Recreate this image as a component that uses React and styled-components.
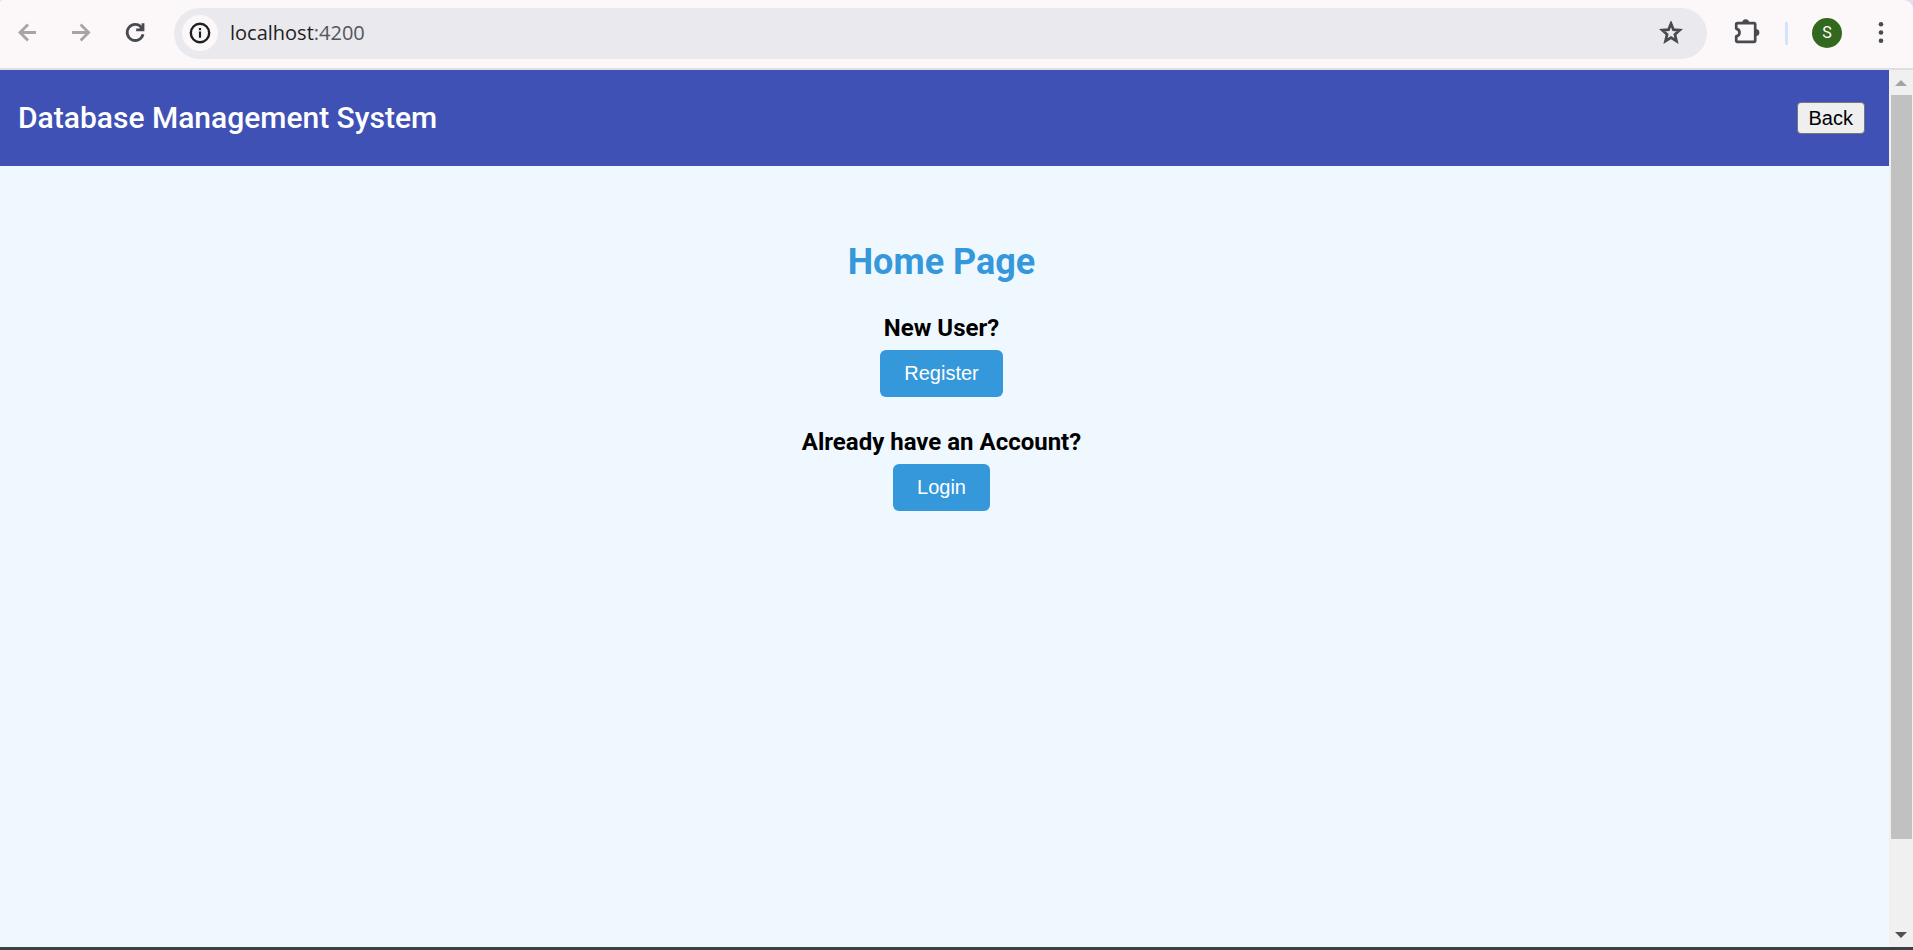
import React from "react";
import styled, { createGlobalStyle } from "styled-components";

const GlobalStyle = createGlobalStyle`
  *, *::before, *::after { box-sizing: border-box; }
  body { margin: 0; background: #dce1ee; }
  h1, h2, p { margin: 0; }
`;

const Window = styled.div`
  display: flex;
  flex-direction: column;
  min-height: 100vh;
`;

const BrowserBar = styled.div`
  display: flex;
  align-items: center;
  height: 70px;
  padding: 0 28px 2px 15px;
  background: #fcf8f9;
  border-bottom: 2px solid #dfdee0;
  border-radius: 3px 9px 0 0;
`;

const NavGroup = styled.nav`
  display: flex;
  gap: 30px;
  margin-right: 27px;
`;

const IconButton = styled.button`
  display: flex;
  padding: 0;
  border: 0;
  background: none;
  color: ${(p) => (p.$muted ? "#a6a4a5" : "#474a4f")};
`;

const AddressBar = styled.div`
  display: flex;
  flex: 1;
  align-items: center;
  height: 51px;
  padding: 0 24px 0 8px;
  border-radius: 26px;
  background: #e9e9ee;
`;

const SiteInfo = styled.button`
  display: flex;
  align-items: center;
  justify-content: center;
  width: 36px;
  height: 36px;
  padding: 0;
  border: 0;
  border-radius: 50%;
  background: #fcf8f9;
  color: #1f1f1f;
`;

const Address = styled.p`
  flex: 1;
  margin-left: 12px;
  font: 20px/28px "Open Sans", "Noto Sans", sans-serif;
  color: #1f1f1f;
`;

const Port = styled.span`
  color: #55555a;
`;

const ToolGroup = styled.div`
  display: flex;
  align-items: center;
  gap: 24px;
  margin-left: 26px;
`;

const Divider = styled.span`
  width: 3px;
  height: 23px;
  border-radius: 1px;
  background: #d3e3fd;
`;

const Avatar = styled.button`
  width: 30px;
  height: 30px;
  margin-right: 11px;
  padding: 0;
  border: 0;
  border-radius: 50%;
  background: #33691e;
  color: #fff;
  font: 16px/30px Roboto, sans-serif;
`;

const Viewport = styled.div`
  display: flex;
  flex: 1;
  border-bottom: 3px solid #3f3e42;
`;

const Page = styled.div`
  display: flex;
  flex: 1;
  flex-direction: column;
  background: #f0f8ff;
`;

const Header = styled.header`
  display: flex;
  align-items: center;
  justify-content: space-between;
  height: 96px;
  padding: 0 24px 0 18px;
  background: #3f51b5;
`;

const Brand = styled.p`
  font: 500 30px/48px Roboto, sans-serif;
  color: #fff;
`;

const BackButton = styled.button`
  height: 32px;
  padding: 0 11px;
  border: 1px solid #767676;
  border-radius: 4px;
  background: #efefef;
  color: #000;
  font: 20px/24px "Liberation Sans", Arial, sans-serif;
`;

const Main = styled.main`
  display: flex;
  flex-direction: column;
  align-items: center;
  gap: 30px;
  padding: 75px 6px 0 0;
`;

const PageTitle = styled.h1`
  font: 700 36px/42px Roboto, sans-serif;
  color: #3498db;
`;

const Choice = styled.section`
  display: flex;
  flex-direction: column;
  align-items: center;
  gap: 7px;
`;

const Question = styled.h2`
  font: 700 24px/30px Roboto, sans-serif;
  color: #000;
`;

const ActionButton = styled.button`
  padding: 12px 24px;
  border: 0;
  border-radius: 6px;
  background: #3498db;
  color: #fff;
  font: 20px/23px "Liberation Sans", Arial, sans-serif;
`;

const Scrollbar = styled.div`
  display: flex;
  flex-direction: column;
  width: 24px;
  background: #f0f0f0;
`;

const ScrollArrow = styled.span`
  display: flex;
  align-items: center;
  justify-content: center;
  height: 25px;
  color: ${(p) => (p.$muted ? "#a3a3a3" : "#505050")};
`;

const ScrollTrack = styled.div`
  flex: 1;
  padding: 0 1px 0 2px;
`;

const ScrollThumb = styled.div`
  height: 90%;
  background: #c1c1c1;
`;

const ArrowIcon = ({ forward }) => (
  <svg width="24" height="24" viewBox="0 0 24 24" fill="none" stroke="currentColor" strokeWidth="2.8">
    {forward ? (
      <path d="M3 11.5H20M11.6 3.5L19.6 11.5L11.6 19.5" />
    ) : (
      <path d="M21 11.5H4.6M13 3.5L5 11.5L13 19.5" />
    )}
  </svg>
);

const ReloadIcon = () => (
  <svg width="24" height="24" viewBox="0 0 24 24" fill="none" stroke="currentColor" strokeWidth="2.8">
    <path d="M20 13.2A8 8 0 1 1 18.4 6.4" />
    <path d="M20 2.2V8.8H13.2" />
    <path d="M15.6 8.6L20 4.4V9Z" fill="currentColor" stroke="none" />
  </svg>
);

const InfoIcon = () => (
  <svg width="22" height="22" viewBox="0 0 22 22" fill="none" stroke="currentColor">
    <circle cx="11" cy="11" r="9.2" strokeWidth="2.4" />
    <path d="M11 9.6V15.8M11 6V8.2" strokeWidth="2.2" />
  </svg>
);

const StarIcon = () => (
  <svg width="24" height="24" viewBox="0 0 24 24" fill="none" stroke="currentColor" strokeWidth="2.7">
    <path d="M12 2.6L14.4 8.6L20.8 9.1L15.9 13.4L17.5 20L12 16.5L6.5 20L8.1 13.4L3.2 9.1L9.6 8.6Z" />
  </svg>
);

const PuzzleIcon = () => (
  <svg width="28" height="28" viewBox="0 0 28 28" fill="none" stroke="currentColor" strokeWidth="2.7">
    <path
      strokeLinejoin="round"
      d="M4.4 4.2H21Q22.2 4.2 22.2 5.4V21.6Q22.2 22.8 21 22.8H4.4Q3.2 22.8 3.2 21.6V17.4C7.6 16.4 7.6 10.6 3.2 9.6V5.4Q3.2 4.2 4.4 4.2Z"
    />
    <path d="M9.2 4A3.5 3.8 0 0 1 16.2 4ZM22.6 10A3.8 3.5 0 0 1 22.6 17Z" fill="currentColor" stroke="none" />
  </svg>
);

const MenuIcon = () => (
  <svg width="8" height="24" viewBox="0 0 8 24" fill="currentColor">
    <circle cx="4" cy="3.2" r="2.3" />
    <circle cx="4" cy="11.5" r="2.3" />
    <circle cx="4" cy="19.8" r="2.3" />
  </svg>
);

const Triangle = ({ down }) => (
  <svg width="12" height="6" viewBox="0 0 12 6" fill="currentColor">
    <path d={down ? "M0 0H12L6 6Z" : "M0 6H12L6 0Z"} />
  </svg>
);

export default function App() {
  return (
    <Window>
      <GlobalStyle />
      <BrowserBar>
        <NavGroup aria-label="Browser">
          <IconButton $muted aria-label="Go back"><ArrowIcon /></IconButton>
          <IconButton $muted aria-label="Go forward"><ArrowIcon forward /></IconButton>
          <IconButton aria-label="Reload"><ReloadIcon /></IconButton>
        </NavGroup>
        <AddressBar>
          <SiteInfo aria-label="Site information"><InfoIcon /></SiteInfo>
          <Address>localhost<Port>:4200</Port></Address>
          <IconButton aria-label="Bookmark"><StarIcon /></IconButton>
        </AddressBar>
        <ToolGroup>
          <IconButton aria-label="Extensions"><PuzzleIcon /></IconButton>
          <Divider />
          <Avatar aria-label="Profile">S</Avatar>
          <IconButton aria-label="Menu"><MenuIcon /></IconButton>
        </ToolGroup>
      </BrowserBar>
      <Viewport>
        <Page>
          <Header>
            <Brand>Database Management System</Brand>
            <BackButton type="button">Back</BackButton>
          </Header>
          <Main>
            <PageTitle>Home Page</PageTitle>
            <Choice>
              <Question>New User?</Question>
              <ActionButton type="button">Register</ActionButton>
            </Choice>
            <Choice>
              <Question>Already have an Account?</Question>
              <ActionButton type="button">Login</ActionButton>
            </Choice>
          </Main>
        </Page>
        <Scrollbar aria-hidden="true">
          <ScrollArrow $muted><Triangle /></ScrollArrow>
          <ScrollTrack><ScrollThumb /></ScrollTrack>
          <ScrollArrow><Triangle down /></ScrollArrow>
        </Scrollbar>
      </Viewport>
    </Window>
  );
}
